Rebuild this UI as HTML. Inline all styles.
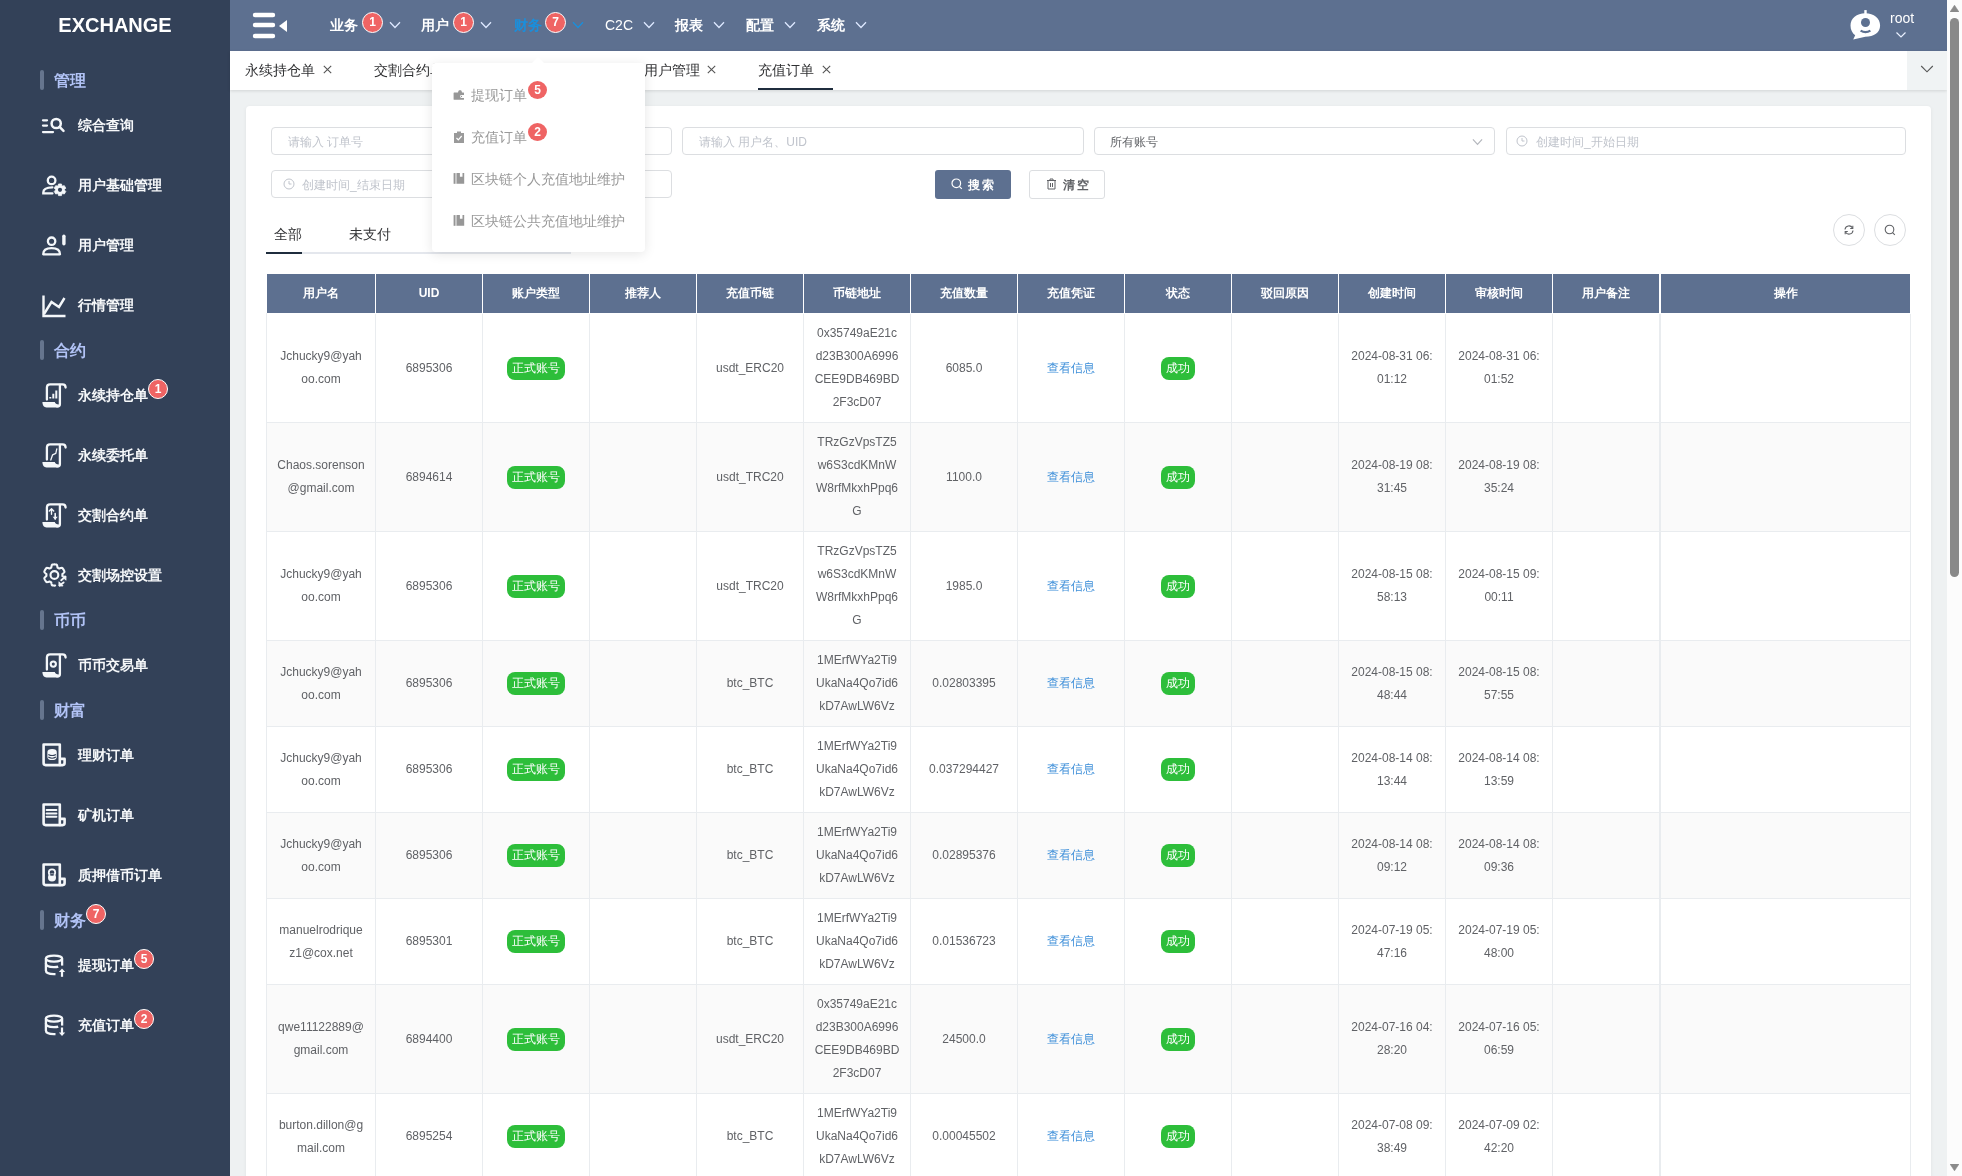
<!DOCTYPE html>
<html><head><meta charset="utf-8">
<style>
*{box-sizing:border-box;margin:0;padding:0}
html,body{width:1962px;height:1176px;overflow:hidden;background:#eef1f2;font-family:"Liberation Sans",sans-serif;}
body{will-change:transform}
.a{position:absolute}
.sb{left:0;top:0;width:230px;height:1176px;background:#334158}
.logo{left:0;top:11px;width:230px;text-align:center;color:#fff;font-weight:bold;font-size:20px;line-height:28px}
.sec{left:54px;height:22px;line-height:22px;font-size:16px;color:#b2c3f6;font-weight:bold}
.secbar{left:40px;width:4px;height:20px;border-radius:2px;background:#66758e}
.mi{left:78px;height:20px;line-height:20px;font-size:14px;color:#f6f8fa;font-weight:bold}
.ic{left:40px;width:28px;height:28px}
.badge{background:#ef6464;border:1px solid #fff;border-radius:50%;color:#fff;font-size:12px;text-align:center;font-weight:bold}
.hd{left:230px;top:0;width:1717px;height:51px;background:#5d7090}
.nav{top:15px;height:20px;line-height:20px;font-size:14px;color:#fff;font-weight:bold}
.tb{left:230px;top:51px;width:1717px;height:39px;background:#fff;box-shadow:0 1px 3px rgba(0,0,0,.12)}
.tab{top:61px;height:18px;line-height:18px;font-size:14px;color:#303133}
.card{left:246px;top:106px;width:1685px;height:1200px;background:#fff;border-radius:4px;box-shadow:0 1px 4px rgba(0,0,0,.06)}
.inp{height:28px;border:1px solid #dcdee1;border-radius:4px;background:#fff}
.ph{font-size:12px;color:#c0c4cc;line-height:28px;white-space:nowrap}
.th{top:274px;height:39px;background:#5d7090;color:#fff;font-weight:bold;font-size:12px;line-height:39px;text-align:center}
.cell{color:#606266;font-size:12px;line-height:23px;text-align:center;display:flex;align-items:center;justify-content:center}
.tag{display:inline-block;height:23px;line-height:23px;padding:0 5px;border-radius:8px;background:#2dbe3a;color:#fff;font-size:12px}
.lnk{color:#3e8fd9}
.dd{left:432px;top:63px;width:213px;height:189px;background:#fff;border-radius:4px;box-shadow:0 2px 12px rgba(0,0,0,.1)}
.ddi{left:471px;height:20px;line-height:20px;font-size:14px;color:#999}
</style></head><body>

<div class="a sb"></div>
<div class="a logo">EXCHANGE</div>
<div class="a secbar" style="top:70px"></div>
<div class="a sec" style="top:70px">管理</div>
<svg class="a ic" style="top:111px" viewBox="0 0 28 28" fill="none" stroke="#f4f7fa" stroke-width="2.3" stroke-linecap="round">
<path d="M3 9.3H7M3 14.6H7M3 21.1H13"/><circle cx="16.2" cy="12.5" r="4.6" stroke-width="2.5"/><path d="M19.6 15.9 L23.5 19.8" stroke-width="2.5"/></svg>
<div class="a mi" style="top:115px">综合查询</div>
<svg class="a ic" style="top:171px" viewBox="0 0 28 28" fill="none" stroke="#f4f7fa" stroke-width="2.3" stroke-linecap="round">
<circle cx="11.6" cy="9.4" r="3.8"/><path d="M12.4 16.4 Q3.3 16.6 3.3 21.4 V22.4 H12.4"/>
<path d="M18.00 14.88 L18.55 12.98 L21.45 12.98 L22.00 14.88 L22.40 15.11 L24.32 14.63 L25.77 17.15 L24.39 18.57 L24.39 19.03 L25.77 20.45 L24.32 22.97 L22.40 22.49 L22.00 22.72 L21.45 24.62 L18.55 24.62 L18.00 22.72 L17.60 22.49 L15.68 22.97 L14.23 20.45 L15.61 19.03 L15.61 18.57 L14.23 17.15 L15.68 14.63 L17.60 15.11Z" fill="#f4f7fa" stroke="#f4f7fa" stroke-width="0.8" stroke-linejoin="round"/><circle cx="20" cy="18.8" r="2.1" fill="#334158" stroke="none"/></svg>
<div class="a mi" style="top:175px">用户基础管理</div>
<svg class="a ic" style="top:231px" viewBox="0 0 28 28" fill="none" stroke="#f4f7fa" stroke-width="2.3" stroke-linecap="round">
<circle cx="11.6" cy="10.2" r="3.7"/><path d="M3.2 23.3 Q3.2 17.1 11.6 17.1 Q20 17.1 20 23.3 Z" stroke-linejoin="round"/><path d="M23.9 5.3 V12.8" stroke-width="3.4"/></svg>
<div class="a mi" style="top:235px">用户管理</div>
<svg class="a ic" style="top:291px" viewBox="0 0 28 28" fill="none" stroke="#f4f7fa" stroke-width="2.4" stroke-linejoin="miter">
<path d="M3.5 4.5 V25 H25.5"/><path d="M4 23 L11.5 11 L19 16 L24.5 7"/></svg>
<div class="a mi" style="top:295px">行情管理</div>
<div class="a secbar" style="top:340px"></div>
<div class="a sec" style="top:340px">合约</div>
<svg class="a ic" style="top:381px" viewBox="0 0 28 28" fill="none" stroke="#f4f7fa" stroke-width="2.3" stroke-linejoin="round" stroke-linecap="round">
<path d="M6.9 18.6 V6.5 Q6.9 3.3 10 3.3 H22.5 Q25.6 3.3 25.6 6.6"/><path d="M19.9 4 V23 Q19.9 25.6 17 25.6"/><path d="M2.4 21.1 H14.8 Q15.3 23.4 18.8 23.6 Q18.6 26.5 16 26.5 H6.5 Q2.4 26.5 2.4 21.1Z" fill="#f4f7fa" stroke="none"/><path d="M10.3 17.5 V16 M13.3 17.5 V12.8 M16.3 17.5 V9.6" stroke-width="2" stroke-linecap="butt"/></svg>
<div class="a mi" style="top:385px">永续持仓单</div>
<div class="a badge" style="left:148px;top:379px;width:20px;height:20px;line-height:18px">1</div>
<svg class="a ic" style="top:441px" viewBox="0 0 28 28" fill="none" stroke="#f4f7fa" stroke-width="2.3" stroke-linejoin="round" stroke-linecap="round">
<path d="M6.9 18.6 V6.5 Q6.9 3.3 10 3.3 H22.5 Q25.6 3.3 25.6 6.6"/><path d="M19.9 4 V23 Q19.9 25.6 17 25.6"/><path d="M2.4 21.1 H14.8 Q15.3 23.4 18.8 23.6 Q18.6 26.5 16 26.5 H6.5 Q2.4 26.5 2.4 21.1Z" fill="#f4f7fa" stroke="none"/><path d="M10.8 19 L12.6 13.8 L15.8 12.4 L16.8 7.8" stroke-width="1.3"/></svg>
<div class="a mi" style="top:445px">永续委托单</div>
<svg class="a ic" style="top:501px" viewBox="0 0 28 28" fill="none" stroke="#f4f7fa" stroke-width="2.3" stroke-linejoin="round" stroke-linecap="round">
<path d="M6.9 18.6 V6.5 Q6.9 3.3 10 3.3 H22.5 Q25.6 3.3 25.6 6.6"/><path d="M19.9 4 V23 Q19.9 25.6 17 25.6"/><path d="M2.4 21.1 H14.8 Q15.3 23.4 18.8 23.6 Q18.6 26.5 16 26.5 H6.5 Q2.4 26.5 2.4 21.1Z" fill="#f4f7fa" stroke="none"/><path d="M11.5 13.3 V7.8 M9.3 10 L11.5 7.8 L13.7 10" stroke-width="1.4"/><path d="M15.2 12.5 V18" stroke-width="1.6"/><path d="M12.6 15.8 L15.2 18.8 L17.8 15.8Z" fill="#f4f7fa" stroke="none"/></svg>
<div class="a mi" style="top:505px">交割合约单</div>
<svg class="a ic" style="top:561px" viewBox="0 0 28 28" fill="none" stroke="#f4f7fa" stroke-width="2.1" stroke-linejoin="round" stroke-linecap="round">
<path d="M15.14 24.57 L14.77 24.59 L14.40 24.60 L14.03 24.59 L13.66 24.57 L13.29 24.54 L12.92 24.50 L12.56 24.44 L12.20 24.37 L11.90 24.03 L11.69 23.44 L11.53 22.84 L11.40 22.25 L11.31 21.66 L11.15 21.31 L10.89 21.19 L10.64 21.06 L10.40 20.93 L10.16 20.78 L9.93 20.63 L9.70 20.47 L9.31 20.51 L8.76 20.73 L8.18 20.91 L7.58 21.06 L6.96 21.18 L6.52 21.09 L6.28 20.81 L6.05 20.53 L5.82 20.23 L5.61 19.93 L5.41 19.62 L5.22 19.30 L5.04 18.98 L4.87 18.65 L4.72 18.31 L4.57 17.97 L4.44 17.63 L4.32 17.28 L4.46 16.85 L4.87 16.38 L5.30 15.93 L5.75 15.52 L6.22 15.15 L6.44 14.84 L6.42 14.56 L6.40 14.28 L6.40 14.00 L6.40 13.72 L6.42 13.44 L6.44 13.16 L6.22 12.85 L5.75 12.48 L5.30 12.07 L4.87 11.62 L4.46 11.15 L4.32 10.72 L4.44 10.37 L4.57 10.03 L4.72 9.69 L4.87 9.35 L5.04 9.02 L5.22 8.70 L5.41 8.38 L5.61 8.07 L5.82 7.77 L6.05 7.47 L6.28 7.19 L6.52 6.91 L6.96 6.82 L7.58 6.94 L8.18 7.09 L8.76 7.27 L9.31 7.49 L9.70 7.53 L9.93 7.37 L10.16 7.22 L10.40 7.07 L10.64 6.94 L10.89 6.81 L11.15 6.69 L11.31 6.34 L11.40 5.75 L11.53 5.16 L11.69 4.56 L11.90 3.97 L12.20 3.63 L12.56 3.56 L12.92 3.50 L13.29 3.46 L13.66 3.43 L14.03 3.41 L14.40 3.40 L14.77 3.41 L15.14 3.43 L15.51 3.46 L15.88 3.50 L16.24 3.56 L16.60 3.63 L16.90 3.97 L17.11 4.56 L17.27 5.16 L17.40 5.75 L17.49 6.34 L17.65 6.69 L17.91 6.81 L18.16 6.94 L18.40 7.07 L18.64 7.22 L18.87 7.37 L19.10 7.53 L19.49 7.49 L20.04 7.27 L20.62 7.09 L21.22 6.94 L21.84 6.82 L22.28 6.91 L22.52 7.19 L22.75 7.47 L22.98 7.77 L23.19 8.07 L23.39 8.38 L23.58 8.70 L23.76 9.02 L23.93 9.35 L24.08 9.69 L24.23 10.03 L24.36 10.37 L24.48 10.72 L24.34 11.15 L23.93 11.62 L23.50 12.07 L23.05 12.48 L22.58 12.85 L22.36 13.16 L22.38 13.44 L22.40 13.72 L22.40 14.00 L22.40 14.28 L22.38 14.56 L22.36 14.84"/>
<circle cx="14.4" cy="14" r="3.9" stroke-width="2.1"/>
<path d="M21.2 19.2 L25.3 15.8" stroke-width="1.9"/><path d="M22.3 15.2 H25.9 V18.8Z" fill="#f4f7fa" stroke-width="1"/>
<path d="M23.6 21.4 L19.6 24.6" stroke-width="1.9"/><path d="M19 21.2 V24.9 H22.7Z" fill="#f4f7fa" stroke-width="1"/></svg>
<div class="a mi" style="top:565px">交割场控设置</div>
<div class="a secbar" style="top:610px"></div>
<div class="a sec" style="top:610px">币币</div>
<svg class="a ic" style="top:651px" viewBox="0 0 28 28" fill="none" stroke="#f4f7fa" stroke-width="2.3" stroke-linejoin="round" stroke-linecap="round">
<path d="M6.9 18.6 V6.5 Q6.9 3.3 10 3.3 H22.5 Q25.6 3.3 25.6 6.6"/><path d="M19.9 4 V23 Q19.9 25.6 17 25.6"/><path d="M2.4 21.1 H14.8 Q15.3 23.4 18.8 23.6 Q18.6 26.5 16 26.5 H6.5 Q2.4 26.5 2.4 21.1Z" fill="#f4f7fa" stroke="none"/><circle cx="13.3" cy="13.1" r="2.6" stroke-width="2.1"/></svg>
<div class="a mi" style="top:655px">币币交易单</div>
<div class="a secbar" style="top:700px"></div>
<div class="a sec" style="top:700px">财富</div>
<svg class="a ic" style="top:741px" viewBox="0 0 28 28" fill="none" stroke="#f4f7fa" stroke-width="2.6" stroke-linejoin="round">
<path d="M3.6 3.5 H19.8 V24.1 H5.6 Q3.6 24.1 3.6 22.1 Z"/><path d="M19.8 17.9 H24.6 V22.1 Q24.6 24.1 22.6 24.1 H19.6"/><path d="M7.4 11 Q7.4 7.9 12.1 7.9 Q16.8 7.9 16.8 11 V15.9 Q16.8 19 12.1 19 Q7.4 19 7.4 15.9Z" fill="#f4f7fa" stroke="none"/><path d="M8.3 13.4 Q12.1 15.6 15.9 13.4 M8.3 16.1 Q12.1 18.3 15.9 16.1" stroke="#334158" stroke-width="1.1"/></svg>
<div class="a mi" style="top:745px">理财订单</div>
<svg class="a ic" style="top:801px" viewBox="0 0 28 28" fill="none" stroke="#f4f7fa" stroke-width="2.6" stroke-linejoin="round">
<path d="M3.6 3.5 H19.8 V24.1 H5.6 Q3.6 24.1 3.6 22.1 Z"/><path d="M19.8 17.9 H24.6 V22.1 Q24.6 24.1 22.6 24.1 H19.6"/><path d="M6.6 9.1 H16.4 M6.6 12.4 H16.4 M6.6 15.7 H16.4" stroke-width="2" stroke-linecap="round"/></svg>
<div class="a mi" style="top:805px">矿机订单</div>
<svg class="a ic" style="top:861px" viewBox="0 0 28 28" fill="none" stroke="#f4f7fa" stroke-width="2.6" stroke-linejoin="round">
<path d="M3.6 3.5 H19.8 V24.1 H5.6 Q3.6 24.1 3.6 22.1 Z"/><path d="M19.8 17.9 H24.6 V22.1 Q24.6 24.1 22.6 24.1 H19.6"/><circle cx="12" cy="11.6" r="3.2" stroke-width="1.8"/><ellipse cx="12" cy="16.5" rx="4" ry="4.1" fill="#f4f7fa" stroke="none"/><ellipse cx="12" cy="13.8" rx="2.2" ry="0.9" fill="#334158" stroke="none"/></svg>
<div class="a mi" style="top:865px">质押借币订单</div>
<div class="a secbar" style="top:910px"></div>
<div class="a sec" style="top:910px">财务</div>
<div class="a badge" style="left:86px;top:904px;width:20px;height:20px;line-height:18px">7</div>
<svg class="a ic" style="top:951px" viewBox="0 0 28 28" fill="none" stroke="#f4f7fa" stroke-width="2.3" stroke-linecap="butt">
<ellipse cx="14" cy="7.6" rx="8.1" ry="3"/><path d="M5.9 7.6 V19.5 Q5.9 23.1 14 23.1 H15.5"/><path d="M22.1 7.6 V14.6"/><path d="M5.9 12.5 Q5.9 16.1 14 16.1 Q17 16.1 18.2 15.6"/><path d="M22 25.8 V20" stroke-width="2.2"/><path d="M18.9 21.1 L22 17.4 L25.2 21.1 Z" fill="#f4f7fa" stroke="none"/></svg>
<div class="a mi" style="top:955px">提现订单</div>
<div class="a badge" style="left:134px;top:949px;width:20px;height:20px;line-height:18px">5</div>
<svg class="a ic" style="top:1011px" viewBox="0 0 28 28" fill="none" stroke="#f4f7fa" stroke-width="2.3" stroke-linecap="butt">
<ellipse cx="14" cy="7.6" rx="8.1" ry="3"/><path d="M5.9 7.6 V19.5 Q5.9 23.1 14 23.1 H15.5"/><path d="M22.1 7.6 V14.6"/><path d="M5.9 12.5 Q5.9 16.1 14 16.1 Q17 16.1 18.2 15.6"/><path d="M22 16.5 V22.5" stroke-width="2.2"/><path d="M18.9 21.4 L22 25.1 L25.2 21.4 Z" fill="#f4f7fa" stroke="none"/></svg>
<div class="a mi" style="top:1015px">充值订单</div>
<div class="a badge" style="left:134px;top:1009px;width:20px;height:20px;line-height:18px">2</div>
<div class="a hd"></div>
<svg class="a" style="left:250px;top:10px" width="40" height="32" viewBox="0 0 40 32">
<g stroke="#fff" stroke-width="4.4" stroke-linecap="round"><path d="M5 5H23M5 15H23M5 26H23"/></g>
<path d="M29 16 L37 10 V22 Z" fill="#fff"/></svg>
<div class="a nav" style="left:330px;color:#fff;">业务</div>
<div class="a badge" style="left:362px;top:12px;width:21px;height:21px;line-height:19px">1</div>
<svg class="a" style="left:389px;top:21px" width="12" height="8" viewBox="0 0 12 8"><path d="M1 1.2 L6 6.5 L11 1.2" fill="none" stroke="#dde8ff" stroke-width="1.3"/></svg>
<div class="a nav" style="left:421px;color:#fff;">用户</div>
<div class="a badge" style="left:453px;top:12px;width:21px;height:21px;line-height:19px">1</div>
<svg class="a" style="left:480px;top:21px" width="12" height="8" viewBox="0 0 12 8"><path d="M1 1.2 L6 6.5 L11 1.2" fill="none" stroke="#dde8ff" stroke-width="1.3"/></svg>
<div class="a nav" style="left:514px;color:#1a8fdc;">财务</div>
<div class="a badge" style="left:545px;top:12px;width:21px;height:21px;line-height:19px">7</div>
<svg class="a" style="left:572px;top:21px" width="12" height="8" viewBox="0 0 12 8"><path d="M1 1.2 L6 6.5 L11 1.2" fill="none" stroke="#1a8fdc" stroke-width="1.3"/></svg>
<div class="a nav" style="left:605px;color:#fff;font-weight:normal">C2C</div>
<svg class="a" style="left:643px;top:21px" width="12" height="8" viewBox="0 0 12 8"><path d="M1 1.2 L6 6.5 L11 1.2" fill="none" stroke="#dde8ff" stroke-width="1.3"/></svg>
<div class="a nav" style="left:675px;color:#fff;">报表</div>
<svg class="a" style="left:713px;top:21px" width="12" height="8" viewBox="0 0 12 8"><path d="M1 1.2 L6 6.5 L11 1.2" fill="none" stroke="#dde8ff" stroke-width="1.3"/></svg>
<div class="a nav" style="left:746px;color:#fff;">配置</div>
<svg class="a" style="left:784px;top:21px" width="12" height="8" viewBox="0 0 12 8"><path d="M1 1.2 L6 6.5 L11 1.2" fill="none" stroke="#dde8ff" stroke-width="1.3"/></svg>
<div class="a nav" style="left:817px;color:#fff;">系统</div>
<svg class="a" style="left:855px;top:21px" width="12" height="8" viewBox="0 0 12 8"><path d="M1 1.2 L6 6.5 L11 1.2" fill="none" stroke="#dde8ff" stroke-width="1.3"/></svg>
<svg class="a" style="left:1849px;top:9px" width="33" height="32" viewBox="0 0 33 32">
<path d="M16.3 4.3 C25 4.3 31.1 9.6 31.1 16.4 C31.1 23.4 25 27.7 16.3 27.7 L4.2 30.4 L6.2 26.2 C3.2 23.9 1.5 20.6 1.5 16.4 C1.5 9.6 7.6 4.3 16.3 4.3Z" fill="#fff"/>
<rect x="15.3" y="1.1" width="2.4" height="4.5" fill="#fff"/>
<circle cx="16.5" cy="13.5" r="4.5" fill="#5d7090"/><path d="M11.6 21.6 Q16.5 24.8 21.4 21.6" stroke="#5d7090" stroke-width="2.2" fill="none"/></svg>
<div class="a" style="left:1890px;top:10px;font-size:14px;line-height:16px;color:#fff">root</div>
<svg class="a" style="left:1895px;top:31px" width="12" height="8" viewBox="0 0 12 8"><path d="M1.5 1.5 L6 6 L10.5 1.5" fill="none" stroke="#eaf1ff" stroke-width="1.2"/></svg>
<div class="a tb"></div>
<div class="a tab" style="left:245px">永续持仓单</div>
<svg class="a" style="left:323px;top:65px" width="9" height="9" viewBox="0 0 9 9"><path d="M.8 .8L8.2 8.2M8.2 .8L.8 8.2" stroke="#555" stroke-width="1.1"/></svg>
<div class="a tab" style="left:374px">交割合约单</div>
<svg class="a" style="left:452px;top:65px" width="9" height="9" viewBox="0 0 9 9"><path d="M.8 .8L8.2 8.2M8.2 .8L.8 8.2" stroke="#555" stroke-width="1.1"/></svg>
<div class="a tab" style="left:644px">用户管理</div>
<svg class="a" style="left:707px;top:65px" width="9" height="9" viewBox="0 0 9 9"><path d="M.8 .8L8.2 8.2M8.2 .8L.8 8.2" stroke="#555" stroke-width="1.1"/></svg>
<div class="a tab" style="left:758px">充值订单</div>
<svg class="a" style="left:822px;top:65px" width="9" height="9" viewBox="0 0 9 9"><path d="M.8 .8L8.2 8.2M8.2 .8L.8 8.2" stroke="#555" stroke-width="1.1"/></svg>
<div class="a" style="left:758px;top:88px;width:75px;height:2px;background:#1f2d3d"></div>
<div class="a" style="left:1907px;top:51px;width:40px;height:39px;background:#f0f3f4"></div>
<svg class="a" style="left:1920px;top:65px" width="14" height="8" viewBox="0 0 14 8"><path d="M1.2 1 L7 6.8 L12.8 1" fill="none" stroke="#555" stroke-width="1.1"/></svg>
<div class="a card"></div>
<div class="a inp" style="left:271px;top:127px;width:400.5px"></div><div class="a ph" style="left:288px;top:128px">请输入 订单号</div>
<div class="a inp" style="left:682px;top:127px;width:402px"></div><div class="a ph" style="left:699px;top:128px">请输入 用户名、UID</div>
<div class="a inp" style="left:1094px;top:127px;width:400.5px"></div><div class="a ph" style="left:1110px;top:128px;color:#606266">所有账号</div>
<svg class="a" style="left:1472px;top:138px" width="11" height="8" viewBox="0 0 12 8"><path d="M1 1.2 L6 6.5 L11 1.2" fill="none" stroke="#b4b7bd" stroke-width="1.3"/></svg>
<div class="a inp" style="left:1505.5px;top:127px;width:400.5px"></div><svg class="a" style="left:1516px;top:135px" width="12" height="12" viewBox="0 0 12 12"><circle cx="6" cy="6" r="5" fill="none" stroke="#c0c4cc" stroke-width="1"/><path d="M6 3V6H8.5" fill="none" stroke="#c0c4cc" stroke-width="1"/></svg><div class="a ph" style="left:1536px;top:128px">创建时间_开始日期</div>
<div class="a inp" style="left:271px;top:170px;width:400.5px"></div><svg class="a" style="left:283px;top:178px" width="12" height="12" viewBox="0 0 12 12"><circle cx="6" cy="6" r="5" fill="none" stroke="#c0c4cc" stroke-width="1"/><path d="M6 3V6H8.5" fill="none" stroke="#c0c4cc" stroke-width="1"/></svg><div class="a ph" style="left:302px;top:171px">创建时间_结束日期</div>
<div class="a" style="left:935px;top:170px;width:76px;height:29px;background:#5d7090;border-radius:3px"></div>
<svg class="a" style="left:951px;top:178px" width="12" height="12" viewBox="0 0 12 12"><circle cx="5.3" cy="5.3" r="4.3" fill="none" stroke="#fff" stroke-width="1.2"/><path d="M8.3 8.3L10.8 10.8" stroke="#fff" stroke-width="1.2"/></svg>
<div class="a" style="left:968px;top:177px;font-size:12px;line-height:16px;color:#fff;letter-spacing:2px;font-weight:bold">搜索</div>
<div class="a" style="left:1029px;top:170px;width:76px;height:29px;background:#fff;border:1px solid #dcdee1;border-radius:3px"></div>
<svg class="a" style="left:1046px;top:178px" width="11" height="12" viewBox="0 0 11 12"><path d="M1 2.5H10M4 2.5V1H7V2.5M2 2.5V11H9V2.5M4.5 5V9M6.5 5V9" fill="none" stroke="#606266" stroke-width="1"/></svg>
<div class="a" style="left:1063px;top:177px;font-size:12px;line-height:16px;color:#606266;letter-spacing:2px;font-weight:bold">清空</div>
<div class="a" style="left:274px;top:225px;font-size:14px;line-height:18px;color:#303133">全部</div>
<div class="a" style="left:349px;top:225px;font-size:14px;line-height:18px;color:#303133">未支付</div>
<div class="a" style="left:266px;top:252px;width:305px;height:2px;background:#e4e7ed"></div>
<div class="a" style="left:266px;top:252px;width:36px;height:2px;background:#1f2d3d"></div>
<div class="a" style="left:1833px;top:214px;width:32px;height:32px;border:1px solid #dcdee1;border-radius:50%"></div>
<svg class="a" style="left:1843px;top:224px" width="12" height="12" viewBox="0 0 12 12"><path d="M2 5.5A4 4 0 0 1 9.5 4M10 6.5A4 4 0 0 1 2.5 8" fill="none" stroke="#606266" stroke-width="1.1"/><path d="M9.8 1.8V4.5H7.2M2.2 10.2V7.5H4.8" fill="none" stroke="#606266" stroke-width="1.1"/></svg>
<div class="a" style="left:1874px;top:214px;width:32px;height:32px;border:1px solid #dcdee1;border-radius:50%"></div>
<svg class="a" style="left:1884px;top:224px" width="12" height="12" viewBox="0 0 12 12"><circle cx="5.5" cy="5.5" r="4.3" fill="none" stroke="#606266" stroke-width="1.1"/><path d="M8.6 8.6L10.8 10.8" stroke="#606266" stroke-width="1.1"/></svg>
<div class="a th" style="left:267.00px;width:108.00px">用户名</div>
<div class="a th" style="left:376.00px;width:106.00px">UID</div>
<div class="a th" style="left:483.00px;width:106.00px">账户类型</div>
<div class="a th" style="left:590.00px;width:106.00px">推荐人</div>
<div class="a th" style="left:697.00px;width:106.00px">充值币链</div>
<div class="a th" style="left:804.00px;width:106.00px">币链地址</div>
<div class="a th" style="left:911.00px;width:106.00px">充值数量</div>
<div class="a th" style="left:1018.00px;width:106.00px">充值凭证</div>
<div class="a th" style="left:1125.00px;width:106.00px">状态</div>
<div class="a th" style="left:1232.00px;width:106.00px">驳回原因</div>
<div class="a th" style="left:1339.00px;width:106.00px">创建时间</div>
<div class="a th" style="left:1446.00px;width:106.00px">审核时间</div>
<div class="a th" style="left:1553.00px;width:106.00px">用户备注</div>
<div class="a th" style="left:1661px;width:249px">操作</div>
<div class="a" style="left:266px;top:313px;width:1px;height:900px;background:#e9ecef"></div>
<div class="a" style="left:267px;top:314px;width:1643px;height:109px;background:#fff;border-bottom:1px solid #e9ecef"></div>
<div class="a cell" style="left:267.00px;top:314px;width:109.00px;height:108px;border-right:1px solid #e9ecef;">Jchucky9@yah<br>oo.com</div>
<div class="a cell" style="left:376.00px;top:314px;width:107.00px;height:108px;border-right:1px solid #e9ecef;">6895306</div>
<div class="a cell" style="left:483.00px;top:314px;width:107.00px;height:108px;border-right:1px solid #e9ecef;"><span class="tag">正式账号</span></div>
<div class="a cell" style="left:590.00px;top:314px;width:107.00px;height:108px;border-right:1px solid #e9ecef;"></div>
<div class="a cell" style="left:697.00px;top:314px;width:107.00px;height:108px;border-right:1px solid #e9ecef;">usdt_ERC20</div>
<div class="a cell" style="left:804.00px;top:314px;width:107.00px;height:108px;border-right:1px solid #e9ecef;">0x35749aE21c<br>d23B300A6996<br>CEE9DB469BD<br>2F3cD07</div>
<div class="a cell" style="left:911.00px;top:314px;width:107.00px;height:108px;border-right:1px solid #e9ecef;">6085.0</div>
<div class="a cell" style="left:1018.00px;top:314px;width:107.00px;height:108px;border-right:1px solid #e9ecef;"><span class="lnk">查看信息</span></div>
<div class="a cell" style="left:1125.00px;top:314px;width:107.00px;height:108px;border-right:1px solid #e9ecef;"><span class="tag">成功</span></div>
<div class="a cell" style="left:1232.00px;top:314px;width:107.00px;height:108px;border-right:1px solid #e9ecef;"></div>
<div class="a cell" style="left:1339.00px;top:314px;width:107.00px;height:108px;border-right:1px solid #e9ecef;">2024-08-31 06:<br>01:12</div>
<div class="a cell" style="left:1446.00px;top:314px;width:107.00px;height:108px;border-right:1px solid #e9ecef;">2024-08-31 06:<br>01:52</div>
<div class="a cell" style="left:1553.00px;top:314px;width:107.00px;height:108px;"></div>
<div class="a" style="left:1659px;top:314px;width:2px;height:109px;background:#e9ecef"></div>
<div class="a" style="left:1910px;top:314px;width:1px;height:109px;background:#e9ecef"></div>
<div class="a" style="left:267px;top:423px;width:1643px;height:109px;background:#fafafa;border-bottom:1px solid #e9ecef"></div>
<div class="a cell" style="left:267.00px;top:423px;width:109.00px;height:108px;border-right:1px solid #e9ecef;">Chaos.sorenson<br>@gmail.com</div>
<div class="a cell" style="left:376.00px;top:423px;width:107.00px;height:108px;border-right:1px solid #e9ecef;">6894614</div>
<div class="a cell" style="left:483.00px;top:423px;width:107.00px;height:108px;border-right:1px solid #e9ecef;"><span class="tag">正式账号</span></div>
<div class="a cell" style="left:590.00px;top:423px;width:107.00px;height:108px;border-right:1px solid #e9ecef;"></div>
<div class="a cell" style="left:697.00px;top:423px;width:107.00px;height:108px;border-right:1px solid #e9ecef;">usdt_TRC20</div>
<div class="a cell" style="left:804.00px;top:423px;width:107.00px;height:108px;border-right:1px solid #e9ecef;">TRzGzVpsTZ5<br>w6S3cdKMnW<br>W8rfMkxhPpq6<br>G</div>
<div class="a cell" style="left:911.00px;top:423px;width:107.00px;height:108px;border-right:1px solid #e9ecef;">1100.0</div>
<div class="a cell" style="left:1018.00px;top:423px;width:107.00px;height:108px;border-right:1px solid #e9ecef;"><span class="lnk">查看信息</span></div>
<div class="a cell" style="left:1125.00px;top:423px;width:107.00px;height:108px;border-right:1px solid #e9ecef;"><span class="tag">成功</span></div>
<div class="a cell" style="left:1232.00px;top:423px;width:107.00px;height:108px;border-right:1px solid #e9ecef;"></div>
<div class="a cell" style="left:1339.00px;top:423px;width:107.00px;height:108px;border-right:1px solid #e9ecef;">2024-08-19 08:<br>31:45</div>
<div class="a cell" style="left:1446.00px;top:423px;width:107.00px;height:108px;border-right:1px solid #e9ecef;">2024-08-19 08:<br>35:24</div>
<div class="a cell" style="left:1553.00px;top:423px;width:107.00px;height:108px;"></div>
<div class="a" style="left:1659px;top:423px;width:2px;height:109px;background:#e9ecef"></div>
<div class="a" style="left:1910px;top:423px;width:1px;height:109px;background:#e9ecef"></div>
<div class="a" style="left:267px;top:532px;width:1643px;height:109px;background:#fff;border-bottom:1px solid #e9ecef"></div>
<div class="a cell" style="left:267.00px;top:532px;width:109.00px;height:108px;border-right:1px solid #e9ecef;">Jchucky9@yah<br>oo.com</div>
<div class="a cell" style="left:376.00px;top:532px;width:107.00px;height:108px;border-right:1px solid #e9ecef;">6895306</div>
<div class="a cell" style="left:483.00px;top:532px;width:107.00px;height:108px;border-right:1px solid #e9ecef;"><span class="tag">正式账号</span></div>
<div class="a cell" style="left:590.00px;top:532px;width:107.00px;height:108px;border-right:1px solid #e9ecef;"></div>
<div class="a cell" style="left:697.00px;top:532px;width:107.00px;height:108px;border-right:1px solid #e9ecef;">usdt_TRC20</div>
<div class="a cell" style="left:804.00px;top:532px;width:107.00px;height:108px;border-right:1px solid #e9ecef;">TRzGzVpsTZ5<br>w6S3cdKMnW<br>W8rfMkxhPpq6<br>G</div>
<div class="a cell" style="left:911.00px;top:532px;width:107.00px;height:108px;border-right:1px solid #e9ecef;">1985.0</div>
<div class="a cell" style="left:1018.00px;top:532px;width:107.00px;height:108px;border-right:1px solid #e9ecef;"><span class="lnk">查看信息</span></div>
<div class="a cell" style="left:1125.00px;top:532px;width:107.00px;height:108px;border-right:1px solid #e9ecef;"><span class="tag">成功</span></div>
<div class="a cell" style="left:1232.00px;top:532px;width:107.00px;height:108px;border-right:1px solid #e9ecef;"></div>
<div class="a cell" style="left:1339.00px;top:532px;width:107.00px;height:108px;border-right:1px solid #e9ecef;">2024-08-15 08:<br>58:13</div>
<div class="a cell" style="left:1446.00px;top:532px;width:107.00px;height:108px;border-right:1px solid #e9ecef;">2024-08-15 09:<br>00:11</div>
<div class="a cell" style="left:1553.00px;top:532px;width:107.00px;height:108px;"></div>
<div class="a" style="left:1659px;top:532px;width:2px;height:109px;background:#e9ecef"></div>
<div class="a" style="left:1910px;top:532px;width:1px;height:109px;background:#e9ecef"></div>
<div class="a" style="left:267px;top:641px;width:1643px;height:86px;background:#fafafa;border-bottom:1px solid #e9ecef"></div>
<div class="a cell" style="left:267.00px;top:641px;width:109.00px;height:85px;border-right:1px solid #e9ecef;">Jchucky9@yah<br>oo.com</div>
<div class="a cell" style="left:376.00px;top:641px;width:107.00px;height:85px;border-right:1px solid #e9ecef;">6895306</div>
<div class="a cell" style="left:483.00px;top:641px;width:107.00px;height:85px;border-right:1px solid #e9ecef;"><span class="tag">正式账号</span></div>
<div class="a cell" style="left:590.00px;top:641px;width:107.00px;height:85px;border-right:1px solid #e9ecef;"></div>
<div class="a cell" style="left:697.00px;top:641px;width:107.00px;height:85px;border-right:1px solid #e9ecef;">btc_BTC</div>
<div class="a cell" style="left:804.00px;top:641px;width:107.00px;height:85px;border-right:1px solid #e9ecef;">1MErfWYa2Ti9<br>UkaNa4Qo7id6<br>kD7AwLW6Vz</div>
<div class="a cell" style="left:911.00px;top:641px;width:107.00px;height:85px;border-right:1px solid #e9ecef;">0.02803395</div>
<div class="a cell" style="left:1018.00px;top:641px;width:107.00px;height:85px;border-right:1px solid #e9ecef;"><span class="lnk">查看信息</span></div>
<div class="a cell" style="left:1125.00px;top:641px;width:107.00px;height:85px;border-right:1px solid #e9ecef;"><span class="tag">成功</span></div>
<div class="a cell" style="left:1232.00px;top:641px;width:107.00px;height:85px;border-right:1px solid #e9ecef;"></div>
<div class="a cell" style="left:1339.00px;top:641px;width:107.00px;height:85px;border-right:1px solid #e9ecef;">2024-08-15 08:<br>48:44</div>
<div class="a cell" style="left:1446.00px;top:641px;width:107.00px;height:85px;border-right:1px solid #e9ecef;">2024-08-15 08:<br>57:55</div>
<div class="a cell" style="left:1553.00px;top:641px;width:107.00px;height:85px;"></div>
<div class="a" style="left:1659px;top:641px;width:2px;height:86px;background:#e9ecef"></div>
<div class="a" style="left:1910px;top:641px;width:1px;height:86px;background:#e9ecef"></div>
<div class="a" style="left:267px;top:727px;width:1643px;height:86px;background:#fff;border-bottom:1px solid #e9ecef"></div>
<div class="a cell" style="left:267.00px;top:727px;width:109.00px;height:85px;border-right:1px solid #e9ecef;">Jchucky9@yah<br>oo.com</div>
<div class="a cell" style="left:376.00px;top:727px;width:107.00px;height:85px;border-right:1px solid #e9ecef;">6895306</div>
<div class="a cell" style="left:483.00px;top:727px;width:107.00px;height:85px;border-right:1px solid #e9ecef;"><span class="tag">正式账号</span></div>
<div class="a cell" style="left:590.00px;top:727px;width:107.00px;height:85px;border-right:1px solid #e9ecef;"></div>
<div class="a cell" style="left:697.00px;top:727px;width:107.00px;height:85px;border-right:1px solid #e9ecef;">btc_BTC</div>
<div class="a cell" style="left:804.00px;top:727px;width:107.00px;height:85px;border-right:1px solid #e9ecef;">1MErfWYa2Ti9<br>UkaNa4Qo7id6<br>kD7AwLW6Vz</div>
<div class="a cell" style="left:911.00px;top:727px;width:107.00px;height:85px;border-right:1px solid #e9ecef;">0.037294427</div>
<div class="a cell" style="left:1018.00px;top:727px;width:107.00px;height:85px;border-right:1px solid #e9ecef;"><span class="lnk">查看信息</span></div>
<div class="a cell" style="left:1125.00px;top:727px;width:107.00px;height:85px;border-right:1px solid #e9ecef;"><span class="tag">成功</span></div>
<div class="a cell" style="left:1232.00px;top:727px;width:107.00px;height:85px;border-right:1px solid #e9ecef;"></div>
<div class="a cell" style="left:1339.00px;top:727px;width:107.00px;height:85px;border-right:1px solid #e9ecef;">2024-08-14 08:<br>13:44</div>
<div class="a cell" style="left:1446.00px;top:727px;width:107.00px;height:85px;border-right:1px solid #e9ecef;">2024-08-14 08:<br>13:59</div>
<div class="a cell" style="left:1553.00px;top:727px;width:107.00px;height:85px;"></div>
<div class="a" style="left:1659px;top:727px;width:2px;height:86px;background:#e9ecef"></div>
<div class="a" style="left:1910px;top:727px;width:1px;height:86px;background:#e9ecef"></div>
<div class="a" style="left:267px;top:813px;width:1643px;height:86px;background:#fafafa;border-bottom:1px solid #e9ecef"></div>
<div class="a cell" style="left:267.00px;top:813px;width:109.00px;height:85px;border-right:1px solid #e9ecef;">Jchucky9@yah<br>oo.com</div>
<div class="a cell" style="left:376.00px;top:813px;width:107.00px;height:85px;border-right:1px solid #e9ecef;">6895306</div>
<div class="a cell" style="left:483.00px;top:813px;width:107.00px;height:85px;border-right:1px solid #e9ecef;"><span class="tag">正式账号</span></div>
<div class="a cell" style="left:590.00px;top:813px;width:107.00px;height:85px;border-right:1px solid #e9ecef;"></div>
<div class="a cell" style="left:697.00px;top:813px;width:107.00px;height:85px;border-right:1px solid #e9ecef;">btc_BTC</div>
<div class="a cell" style="left:804.00px;top:813px;width:107.00px;height:85px;border-right:1px solid #e9ecef;">1MErfWYa2Ti9<br>UkaNa4Qo7id6<br>kD7AwLW6Vz</div>
<div class="a cell" style="left:911.00px;top:813px;width:107.00px;height:85px;border-right:1px solid #e9ecef;">0.02895376</div>
<div class="a cell" style="left:1018.00px;top:813px;width:107.00px;height:85px;border-right:1px solid #e9ecef;"><span class="lnk">查看信息</span></div>
<div class="a cell" style="left:1125.00px;top:813px;width:107.00px;height:85px;border-right:1px solid #e9ecef;"><span class="tag">成功</span></div>
<div class="a cell" style="left:1232.00px;top:813px;width:107.00px;height:85px;border-right:1px solid #e9ecef;"></div>
<div class="a cell" style="left:1339.00px;top:813px;width:107.00px;height:85px;border-right:1px solid #e9ecef;">2024-08-14 08:<br>09:12</div>
<div class="a cell" style="left:1446.00px;top:813px;width:107.00px;height:85px;border-right:1px solid #e9ecef;">2024-08-14 08:<br>09:36</div>
<div class="a cell" style="left:1553.00px;top:813px;width:107.00px;height:85px;"></div>
<div class="a" style="left:1659px;top:813px;width:2px;height:86px;background:#e9ecef"></div>
<div class="a" style="left:1910px;top:813px;width:1px;height:86px;background:#e9ecef"></div>
<div class="a" style="left:267px;top:899px;width:1643px;height:86px;background:#fff;border-bottom:1px solid #e9ecef"></div>
<div class="a cell" style="left:267.00px;top:899px;width:109.00px;height:85px;border-right:1px solid #e9ecef;">manuelrodrique<br>z1@cox.net</div>
<div class="a cell" style="left:376.00px;top:899px;width:107.00px;height:85px;border-right:1px solid #e9ecef;">6895301</div>
<div class="a cell" style="left:483.00px;top:899px;width:107.00px;height:85px;border-right:1px solid #e9ecef;"><span class="tag">正式账号</span></div>
<div class="a cell" style="left:590.00px;top:899px;width:107.00px;height:85px;border-right:1px solid #e9ecef;"></div>
<div class="a cell" style="left:697.00px;top:899px;width:107.00px;height:85px;border-right:1px solid #e9ecef;">btc_BTC</div>
<div class="a cell" style="left:804.00px;top:899px;width:107.00px;height:85px;border-right:1px solid #e9ecef;">1MErfWYa2Ti9<br>UkaNa4Qo7id6<br>kD7AwLW6Vz</div>
<div class="a cell" style="left:911.00px;top:899px;width:107.00px;height:85px;border-right:1px solid #e9ecef;">0.01536723</div>
<div class="a cell" style="left:1018.00px;top:899px;width:107.00px;height:85px;border-right:1px solid #e9ecef;"><span class="lnk">查看信息</span></div>
<div class="a cell" style="left:1125.00px;top:899px;width:107.00px;height:85px;border-right:1px solid #e9ecef;"><span class="tag">成功</span></div>
<div class="a cell" style="left:1232.00px;top:899px;width:107.00px;height:85px;border-right:1px solid #e9ecef;"></div>
<div class="a cell" style="left:1339.00px;top:899px;width:107.00px;height:85px;border-right:1px solid #e9ecef;">2024-07-19 05:<br>47:16</div>
<div class="a cell" style="left:1446.00px;top:899px;width:107.00px;height:85px;border-right:1px solid #e9ecef;">2024-07-19 05:<br>48:00</div>
<div class="a cell" style="left:1553.00px;top:899px;width:107.00px;height:85px;"></div>
<div class="a" style="left:1659px;top:899px;width:2px;height:86px;background:#e9ecef"></div>
<div class="a" style="left:1910px;top:899px;width:1px;height:86px;background:#e9ecef"></div>
<div class="a" style="left:267px;top:985px;width:1643px;height:109px;background:#fafafa;border-bottom:1px solid #e9ecef"></div>
<div class="a cell" style="left:267.00px;top:985px;width:109.00px;height:108px;border-right:1px solid #e9ecef;">qwe11122889@<br>gmail.com</div>
<div class="a cell" style="left:376.00px;top:985px;width:107.00px;height:108px;border-right:1px solid #e9ecef;">6894400</div>
<div class="a cell" style="left:483.00px;top:985px;width:107.00px;height:108px;border-right:1px solid #e9ecef;"><span class="tag">正式账号</span></div>
<div class="a cell" style="left:590.00px;top:985px;width:107.00px;height:108px;border-right:1px solid #e9ecef;"></div>
<div class="a cell" style="left:697.00px;top:985px;width:107.00px;height:108px;border-right:1px solid #e9ecef;">usdt_ERC20</div>
<div class="a cell" style="left:804.00px;top:985px;width:107.00px;height:108px;border-right:1px solid #e9ecef;">0x35749aE21c<br>d23B300A6996<br>CEE9DB469BD<br>2F3cD07</div>
<div class="a cell" style="left:911.00px;top:985px;width:107.00px;height:108px;border-right:1px solid #e9ecef;">24500.0</div>
<div class="a cell" style="left:1018.00px;top:985px;width:107.00px;height:108px;border-right:1px solid #e9ecef;"><span class="lnk">查看信息</span></div>
<div class="a cell" style="left:1125.00px;top:985px;width:107.00px;height:108px;border-right:1px solid #e9ecef;"><span class="tag">成功</span></div>
<div class="a cell" style="left:1232.00px;top:985px;width:107.00px;height:108px;border-right:1px solid #e9ecef;"></div>
<div class="a cell" style="left:1339.00px;top:985px;width:107.00px;height:108px;border-right:1px solid #e9ecef;">2024-07-16 04:<br>28:20</div>
<div class="a cell" style="left:1446.00px;top:985px;width:107.00px;height:108px;border-right:1px solid #e9ecef;">2024-07-16 05:<br>06:59</div>
<div class="a cell" style="left:1553.00px;top:985px;width:107.00px;height:108px;"></div>
<div class="a" style="left:1659px;top:985px;width:2px;height:109px;background:#e9ecef"></div>
<div class="a" style="left:1910px;top:985px;width:1px;height:109px;background:#e9ecef"></div>
<div class="a" style="left:267px;top:1094px;width:1643px;height:86px;background:#fff;border-bottom:1px solid #e9ecef"></div>
<div class="a cell" style="left:267.00px;top:1094px;width:109.00px;height:85px;border-right:1px solid #e9ecef;">burton.dillon@g<br>mail.com</div>
<div class="a cell" style="left:376.00px;top:1094px;width:107.00px;height:85px;border-right:1px solid #e9ecef;">6895254</div>
<div class="a cell" style="left:483.00px;top:1094px;width:107.00px;height:85px;border-right:1px solid #e9ecef;"><span class="tag">正式账号</span></div>
<div class="a cell" style="left:590.00px;top:1094px;width:107.00px;height:85px;border-right:1px solid #e9ecef;"></div>
<div class="a cell" style="left:697.00px;top:1094px;width:107.00px;height:85px;border-right:1px solid #e9ecef;">btc_BTC</div>
<div class="a cell" style="left:804.00px;top:1094px;width:107.00px;height:85px;border-right:1px solid #e9ecef;">1MErfWYa2Ti9<br>UkaNa4Qo7id6<br>kD7AwLW6Vz</div>
<div class="a cell" style="left:911.00px;top:1094px;width:107.00px;height:85px;border-right:1px solid #e9ecef;">0.00045502</div>
<div class="a cell" style="left:1018.00px;top:1094px;width:107.00px;height:85px;border-right:1px solid #e9ecef;"><span class="lnk">查看信息</span></div>
<div class="a cell" style="left:1125.00px;top:1094px;width:107.00px;height:85px;border-right:1px solid #e9ecef;"><span class="tag">成功</span></div>
<div class="a cell" style="left:1232.00px;top:1094px;width:107.00px;height:85px;border-right:1px solid #e9ecef;"></div>
<div class="a cell" style="left:1339.00px;top:1094px;width:107.00px;height:85px;border-right:1px solid #e9ecef;">2024-07-08 09:<br>38:49</div>
<div class="a cell" style="left:1446.00px;top:1094px;width:107.00px;height:85px;border-right:1px solid #e9ecef;">2024-07-09 02:<br>42:20</div>
<div class="a cell" style="left:1553.00px;top:1094px;width:107.00px;height:85px;"></div>
<div class="a" style="left:1659px;top:1094px;width:2px;height:86px;background:#e9ecef"></div>
<div class="a" style="left:1910px;top:1094px;width:1px;height:86px;background:#e9ecef"></div>
<div class="a dd"></div>
<svg class="a" style="left:531px;top:57px" width="14" height="7" viewBox="0 0 14 7"><path d="M0 7L7 0L14 7Z" fill="#fff"/></svg>
<div class="a ddi" style="top:85px">提现订单</div>
<div class="a badge" style="left:528px;top:81px;width:19px;height:18px;line-height:18px;border:none">5</div>
<div class="a ddi" style="top:127px">充值订单</div>
<div class="a badge" style="left:528px;top:123px;width:19px;height:18px;line-height:18px;border:none">2</div>
<div class="a ddi" style="top:169px">区块链个人充值地址维护</div>
<div class="a ddi" style="top:211px">区块链公共充值地址维护</div>
<svg class="a" style="left:453px;top:89px" width="12" height="11" viewBox="0 0 12 11"><rect x="0.6" y="3.5" width="10.4" height="7.3" rx="0.5" fill="#979797"/><ellipse cx="7" cy="3.6" rx="2" ry="2.6" fill="#979797"/><rect x="7.1" y="5.9" width="5" height="3" rx="1.4" fill="#fff"/><circle cx="8.5" cy="7.4" r="0.6" fill="#979797"/></svg>
<svg class="a" style="left:453px;top:131px" width="12" height="12" viewBox="0 0 12 12"><rect x="1" y="2" width="10" height="10" fill="#9a9a9a"/><rect x="4" y="0.5" width="4" height="2.5" fill="#9a9a9a"/><path d="M3.5 7L5.3 8.8L8.7 5" fill="none" stroke="#fff" stroke-width="1.2"/></svg>
<svg class="a" style="left:453px;top:173px" width="12" height="11" viewBox="0 0 12 11"><rect x="0.6" y="0.1" width="1.4" height="10.7" fill="#959595"/><rect x="2" y="0.1" width="1.8" height="10.7" fill="#c6c6c6"/><path d="M3.8 0.1 H6.9 V3.7 H9.5 V0.1 H11.2 V10.8 H3.8Z" fill="#979797"/></svg>
<svg class="a" style="left:453px;top:215px" width="12" height="11" viewBox="0 0 12 11"><rect x="0.6" y="0.1" width="1.4" height="10.7" fill="#959595"/><rect x="2" y="0.1" width="1.8" height="10.7" fill="#c6c6c6"/><path d="M3.8 0.1 H6.9 V3.7 H9.5 V0.1 H11.2 V10.8 H3.8Z" fill="#979797"/></svg>
<div class="a" style="left:1947px;top:0;width:15px;height:1176px;background:#fcfcfc"></div>
<svg class="a" style="left:1950px;top:5px" width="9" height="7" viewBox="0 0 9 7"><path d="M4.5 0.2L9 7H0Z" fill="#8a8a8a" stroke="#8a8a8a" stroke-width="0.6" stroke-linejoin="round"/></svg>
<div class="a" style="left:1950px;top:18px;width:9px;height:559px;background:#898989;border-radius:5px"></div>
<svg class="a" style="left:1950px;top:1164px" width="9" height="7" viewBox="0 0 9 7"><path d="M4.5 6.8L9 0H0Z" fill="#8a8a8a" stroke="#8a8a8a" stroke-width="0.6" stroke-linejoin="round"/></svg>
</body></html>
